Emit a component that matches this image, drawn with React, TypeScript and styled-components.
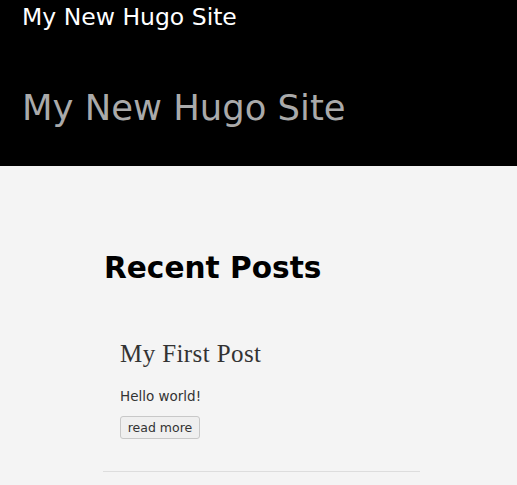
import React from "react";
import styled, { createGlobalStyle } from "styled-components";

const Global = createGlobalStyle`
  html, body { margin: 0; padding: 0; }
  body {
    background: #f4f4f4;
    font-family: "DejaVu Sans", Verdana, sans-serif;
    color: #333;
  }
`;

const Header = styled.header`
  background: #000;
  height: 166px;
  padding: 0 22px;
  box-sizing: border-box;
  display: flex;
  flex-direction: column;
`;

const SiteLink = styled.a`
  color: #fff;
  text-decoration: none;
  font-size: 23.5px;
  line-height: 34px;
  height: 34px;
`;

const HeroTitle = styled.div`
  color: #aaa;
  font-size: 35.4px;
  line-height: 40px;
  margin-top: 54px;
`;

const Main = styled.main`
  padding-left: 103px;
  width: 317px;
  display: flex;
  flex-direction: column;
`;

const PageTitle = styled.h1`
  margin: 84px 0 0 1px;
  font-size: 29.6px;
  line-height: 36px;
  font-weight: bold;
  color: #000;
`;

const Article = styled.article`
  padding-left: 17px;
  display: flex;
  flex-direction: column;
  align-items: flex-start;
`;

const PostTitle = styled.h2`
  margin: 53px 0 0 0;
  font-family: "Liberation Serif", "Times New Roman", serif;
  font-weight: normal;
  font-size: 25px;
  letter-spacing: 0.4px;
  line-height: 30px;
  color: #333;
`;

const Summary = styled.p`
  margin: 17px 0 0 0;
  font-size: 13.5px;
  line-height: 20px;
  color: #333;
`;

const ReadMore = styled.button`
  margin-top: 10px;
  height: 23px;
  width: 80px;
  padding: 0;
  font-family: "DejaVu Sans", Verdana, sans-serif;
  font-size: 12.5px;
  color: #333;
  background: #efefef;
  border: 1px solid #c8c8c8;
  border-radius: 3px;
`;

const Rule = styled.hr`
  margin: 32px 0 0 0;
  border: 0;
  border-top: 1px solid #ddd;
  width: 317px;
`;

export default function App() {
  return (
    <>
      <Global />
      <Header>
        <SiteLink href="#">My New Hugo Site</SiteLink>
        <HeroTitle>My New Hugo Site</HeroTitle>
      </Header>
      <Main>
        <PageTitle>Recent Posts</PageTitle>
        <Article>
          <PostTitle>My First Post</PostTitle>
          <Summary>Hello world!</Summary>
          <ReadMore>read more</ReadMore>
        </Article>
        <Rule />
      </Main>
    </>
  );
}
